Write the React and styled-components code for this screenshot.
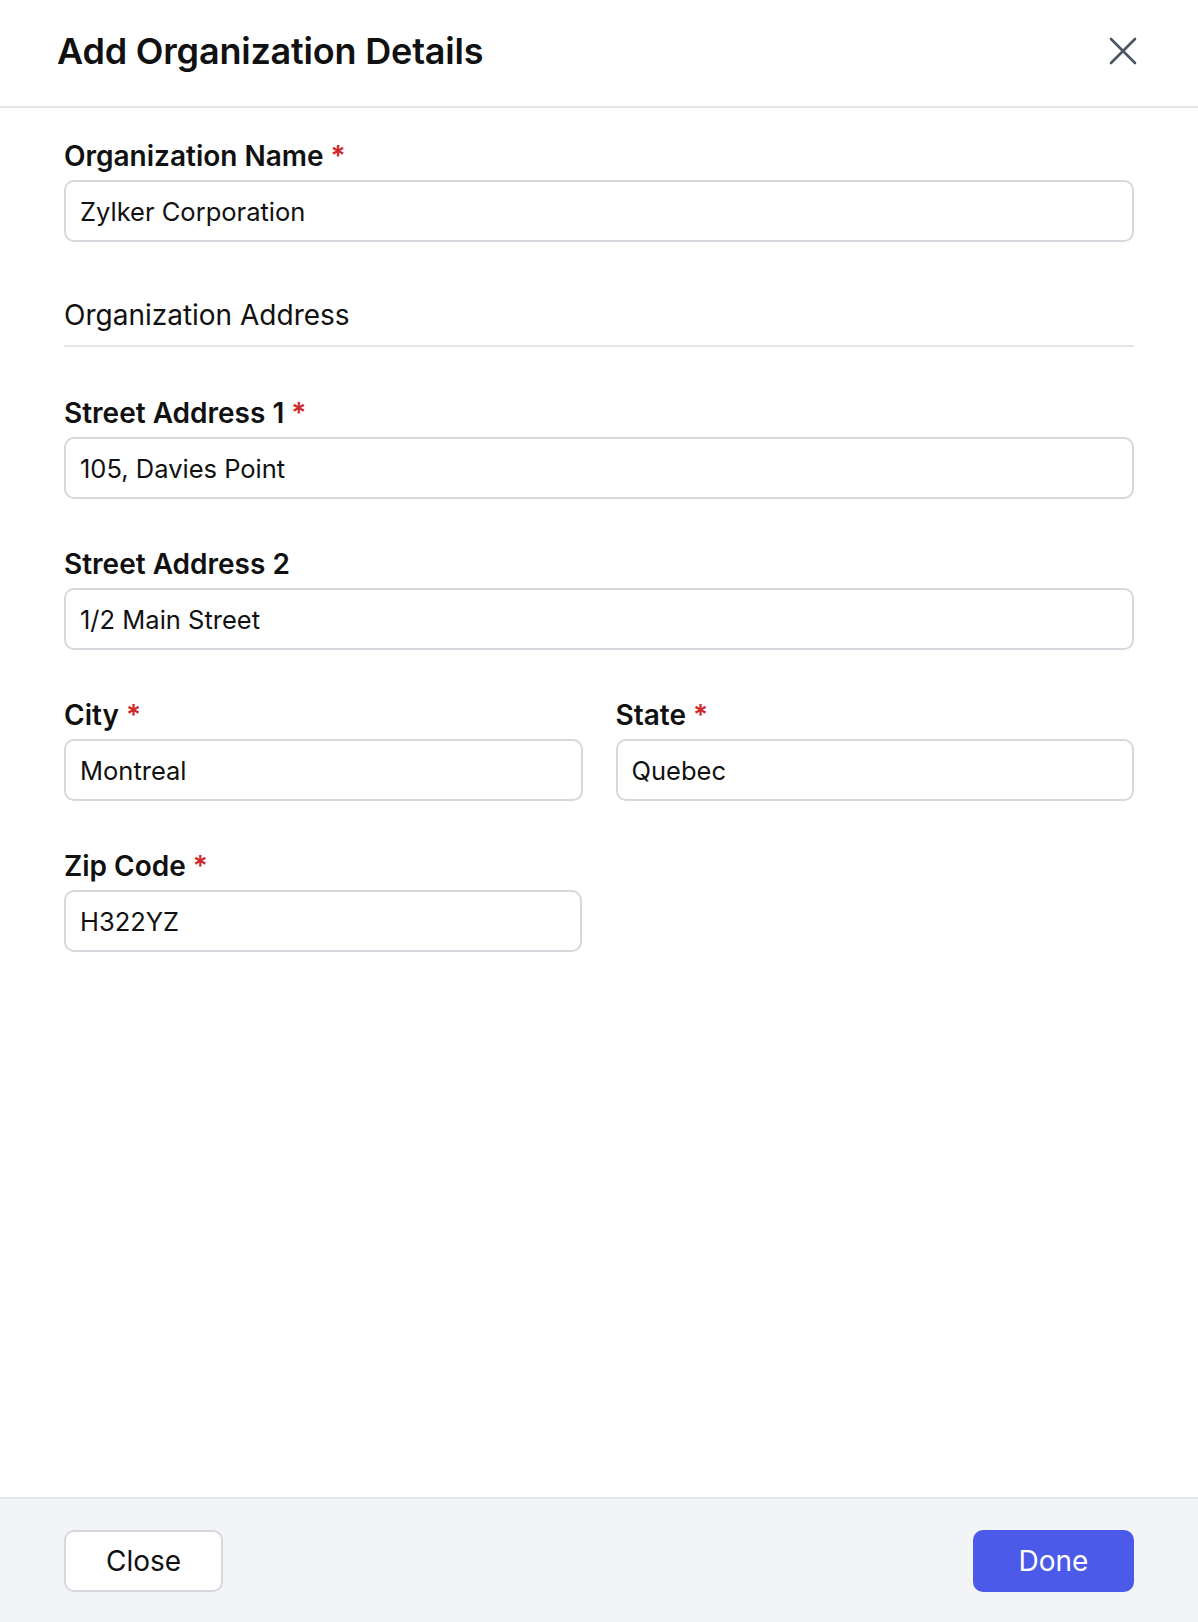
import styled, { createGlobalStyle } from "styled-components";

const GlobalStyle = createGlobalStyle`
  html, body {
    margin: 0;
    padding: 0;
    background: #ffffff;
  }
  * {
    box-sizing: border-box;
  }
`;

const Modal = styled.div`
  width: 1198px;
  height: 1622px;
  display: flex;
  flex-direction: column;
  background: #ffffff;
  font-family: Inter, "Noto Sans", sans-serif;
  color: #111111;
`;

const Header = styled.div`
  height: 108px;
  display: flex;
  align-items: center;
  justify-content: space-between;
  padding: 0 60px 4px 57px;
  border-bottom: 2px solid #e5e6ea;
`;

const Title = styled.h1`
  margin: 0;
  font-size: 36px;
  font-weight: 600;
  letter-spacing: -0.2px;
`;

const CloseIcon = styled.button`
  width: 30px;
  height: 30px;
  padding: 0;
  border: none;
  background: none;
  display: flex;
  align-items: center;
  justify-content: center;
  cursor: pointer;
`;

const Body = styled.div`
  flex: 1;
  padding: 30px 64px;
  display: flex;
  flex-direction: column;
`;

const Field = styled.div`
  display: flex;
  flex-direction: column;
  gap: 6px;
  margin-bottom: 47px;
`;

const Label = styled.label`
  font-size: 28px;
  font-weight: 600;
  line-height: 36px;
  color: #111111;
`;

const Star = styled.span`
  color: #cf2a2a;
  margin-left: 7px;
`;

const Input = styled.input`
  height: 62px;
  width: 100%;
  padding: 0 14px;
  font-family: Inter, "Noto Sans", sans-serif;
  font-size: 25.5px;
  color: #111111;
  border: 2px solid #d6d8dd;
  border-radius: 10px;
  background: #ffffff;
  outline: none;
`;

const SectionTitle = styled.div`
  font-size: 28px;
  line-height: 36px;
  font-weight: 400;
  padding-bottom: 12px;
  border-bottom: 2px solid #e5e6ea;
  margin-bottom: 48px;
  margin-top: 8px;
`;

const Row = styled.div`
  display: flex;
  gap: 33px;

  & > * {
    flex: 1;
  }
`;

const Half = styled.div`
  width: 518px;
`;

const Footer = styled.div`
  height: 125px;
  background: #f3f4f6;
  border-top: 2px solid #e5e6ea;
  display: flex;
  align-items: center;
  justify-content: space-between;
  padding: 0 64px;
`;

const Button = styled.button`
  height: 62px;
  width: ${(p) => p.$w}px;
  border-radius: 10px;
  font-family: Inter, "Noto Sans", sans-serif;
  font-size: 28px;
  font-weight: 400;
  cursor: pointer;
  border: 2px solid ${(p) => (p.$primary ? "#4b5ae8" : "#d6d8dd")};
  background: ${(p) => (p.$primary ? "#4b5ae8" : "#ffffff")};
  color: ${(p) => (p.$primary ? "#ffffff" : "#111111")};
`;

const TextField = ({ label, required, value }) => (
  <Field>
    <Label>
      {label}
      {required && <Star>*</Star>}
    </Label>
    <Input defaultValue={value} />
  </Field>
);

export default function App() {
  return (
    <>
      <GlobalStyle />
      <Modal>
        <Header>
          <Title>Add Organization Details</Title>
          <CloseIcon aria-label="Close">
            <svg width="28" height="28" viewBox="0 0 28 28">
              <path
                d="M2 2 L26 26 M26 2 L2 26"
                stroke="#4b5563"
                strokeWidth="2.6"
                strokeLinecap="round"
              />
            </svg>
          </CloseIcon>
        </Header>
        <Body>
          <TextField label="Organization Name" required value="Zylker Corporation" />
          <SectionTitle>Organization Address</SectionTitle>
          <TextField label="Street Address 1" required value="105, Davies Point" />
          <TextField label="Street Address 2" value="1/2 Main Street" />
          <Row>
            <TextField label="City" required value="Montreal" />
            <TextField label="State" required value="Quebec" />
          </Row>
          <Half>
            <TextField label="Zip Code" required value="H322YZ" />
          </Half>
        </Body>
        <Footer>
          <Button $w={159}>Close</Button>
          <Button $w={161} $primary>
            Done
          </Button>
        </Footer>
      </Modal>
    </>
  );
}
